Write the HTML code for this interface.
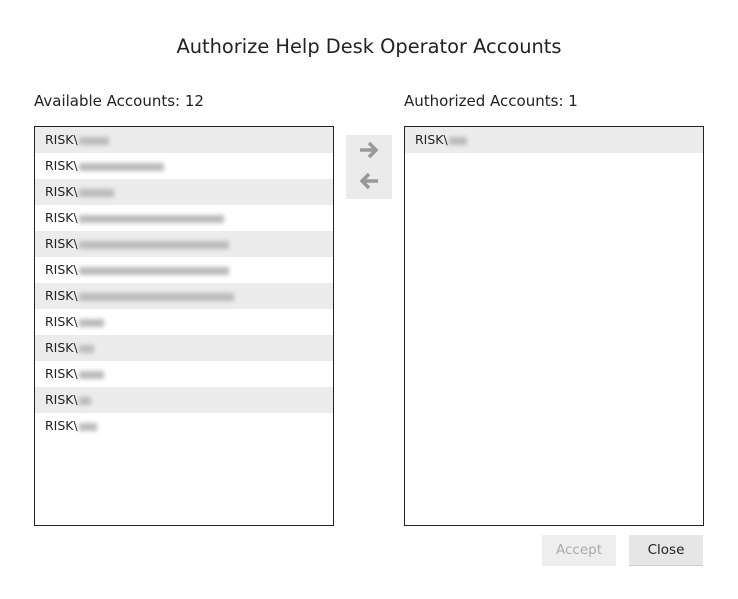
<!DOCTYPE html><html><head><style>
body{margin:0;width:738px;height:599px;background:#fff;font-family:"DejaVu Sans","Liberation Sans",sans-serif;color:#222;position:relative;overflow:hidden}
.t{position:absolute;top:35px;left:0;width:738px;text-align:center;font-size:19.4px}
.l{position:absolute;top:92px;font-size:15px}
.box{position:absolute;top:126px;width:298px;height:398px;border:1px solid #222}
.r{height:26px;line-height:26px;padding-left:10px;font-size:12.5px}
.r:nth-child(odd){background:#ececec}
.b{display:inline-block;height:8px;background:#bbb;filter:blur(2px);vertical-align:middle;margin-left:1px}
.ar{position:absolute;left:346px;top:135px;width:46px;height:64px;background:#ebebeb}
.btn{position:absolute;top:535px;width:74px;height:31px;background:#e6e6e6;text-align:center;line-height:31px;font-size:13.5px}
</style></head><body>
<div class="t">Authorize Help Desk Operator Accounts</div>
<div class="l" style="left:34px">Available Accounts: 12</div>
<div class="l" style="left:404px">Authorized Accounts: 1</div>
<div class="box" style="left:34px">
<div class="r">RISK\<span class="b" style="width:30px"></span></div>
<div class="r">RISK\<span class="b" style="width:85px"></span></div>
<div class="r">RISK\<span class="b" style="width:35px"></span></div>
<div class="r">RISK\<span class="b" style="width:145px"></span></div>
<div class="r">RISK\<span class="b" style="width:150px"></span></div>
<div class="r">RISK\<span class="b" style="width:150px"></span></div>
<div class="r">RISK\<span class="b" style="width:155px"></span></div>
<div class="r">RISK\<span class="b" style="width:25px"></span></div>
<div class="r">RISK\<span class="b" style="width:15px"></span></div>
<div class="r">RISK\<span class="b" style="width:25px"></span></div>
<div class="r">RISK\<span class="b" style="width:12px"></span></div>
<div class="r" style="background:#fff">RISK\<span class="b" style="width:18px"></span></div>
</div>
<div class="ar"><svg width="46" height="64" viewBox="0 0 46 64"><g fill="none" stroke="#999" stroke-width="3.5"><path d="M14 15h16M23 8l7 7-7 7"/><path d="M32 46H16M23 39l-7 7 7 7"/></g></svg></div>
<div class="box" style="left:404px"><div class="r">RISK\<span class="b" style="width:18px"></span></div></div>
<div class="btn" style="left:542px;color:#aaa;background:#eee">Accept</div>
<div class="btn" style="left:629px;color:#222;border-bottom:1px solid #ccc;height:30px">Close</div>
</body></html>
